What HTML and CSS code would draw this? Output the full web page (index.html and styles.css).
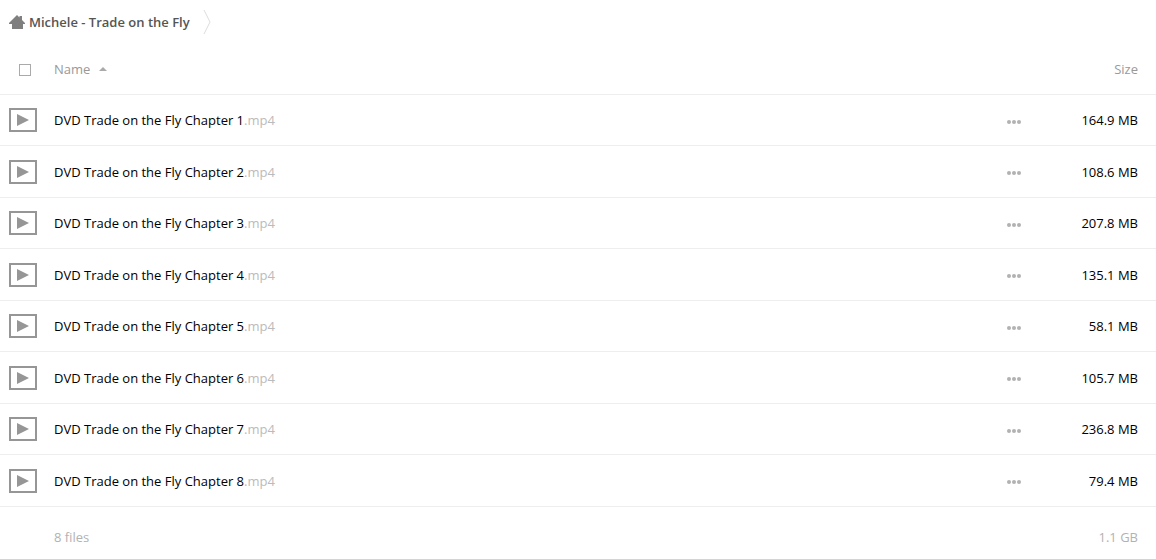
FILE: index.html
```html
<!DOCTYPE html>
<html lang="en">
<head>
<meta charset="utf-8">
<title>Michele - Trade on the Fly</title>
<link rel="stylesheet" href="styles.css">
</head>
<body>
<svg class="sprite" aria-hidden="true">
  <symbol id="video" viewBox="0 0 28 24"><path d="M1 1h26v22H1z" fill="#fff" stroke="#969696" stroke-width="2"/><path d="M8 6v12l12-6z" fill="#969696"/></symbol>
  <symbol id="dots" viewBox="0 0 14 4"><g fill="#b2b2b2"><circle cx="2" cy="2" r="2"/><circle cx="7" cy="2" r="2"/><circle cx="12" cy="2" r="2"/></g></symbol>
</svg>
<nav class="breadcrumb" aria-label="Breadcrumb">
  <a class="home" href="#">
    <svg class="home-icon" viewBox="0 0 16 14" aria-hidden="true"><path d="M8 0l2.5 2.4V1H13v4l3 3v1h-2v5H3V9H0V8z" fill="#7f7f7f"/></svg>
    <span>Michele - Trade on the Fly</span>
  </a>
  <svg class="separator" viewBox="0 0 8 26" aria-hidden="true"><path d="M1 1l6 12-6 12" fill="none" stroke="#ddd"/></svg>
</nav>
<table class="files">
  <thead>
    <tr>
      <th class="icon-cell"><input class="select-all" type="checkbox" aria-label="Select all"></th>
      <th class="name"><button class="sort" type="button">Name <svg class="arrow" viewBox="0 0 8 4" aria-hidden="true"><path d="M0 4l4-4 4 4z" fill="#aaa"/></svg></button></th>
      <th class="actions"></th>
      <th class="size"><button class="sort" type="button">Size</button></th>
    </tr>
  </thead>
  <tbody>
    <tr><td class="icon-cell"><svg class="video"><use href="#video"/></svg></td><td class="name"><a href="#">DVD Trade on the Fly Chapter 1<span class="ext">.mp4</span></a></td><td class="actions"><button class="more" type="button" aria-label="More actions"><svg class="dots"><use href="#dots"/></svg></button></td><td class="size">164.9 MB</td></tr>
    <tr><td class="icon-cell"><svg class="video"><use href="#video"/></svg></td><td class="name"><a href="#">DVD Trade on the Fly Chapter 2<span class="ext">.mp4</span></a></td><td class="actions"><button class="more" type="button" aria-label="More actions"><svg class="dots"><use href="#dots"/></svg></button></td><td class="size">108.6 MB</td></tr>
    <tr><td class="icon-cell"><svg class="video"><use href="#video"/></svg></td><td class="name"><a href="#">DVD Trade on the Fly Chapter 3<span class="ext">.mp4</span></a></td><td class="actions"><button class="more" type="button" aria-label="More actions"><svg class="dots"><use href="#dots"/></svg></button></td><td class="size">207.8 MB</td></tr>
    <tr><td class="icon-cell"><svg class="video"><use href="#video"/></svg></td><td class="name"><a href="#">DVD Trade on the Fly Chapter 4<span class="ext">.mp4</span></a></td><td class="actions"><button class="more" type="button" aria-label="More actions"><svg class="dots"><use href="#dots"/></svg></button></td><td class="size">135.1 MB</td></tr>
    <tr><td class="icon-cell"><svg class="video"><use href="#video"/></svg></td><td class="name"><a href="#">DVD Trade on the Fly Chapter 5<span class="ext">.mp4</span></a></td><td class="actions"><button class="more" type="button" aria-label="More actions"><svg class="dots"><use href="#dots"/></svg></button></td><td class="size">58.1 MB</td></tr>
    <tr><td class="icon-cell"><svg class="video"><use href="#video"/></svg></td><td class="name"><a href="#">DVD Trade on the Fly Chapter 6<span class="ext">.mp4</span></a></td><td class="actions"><button class="more" type="button" aria-label="More actions"><svg class="dots"><use href="#dots"/></svg></button></td><td class="size">105.7 MB</td></tr>
    <tr><td class="icon-cell"><svg class="video"><use href="#video"/></svg></td><td class="name"><a href="#">DVD Trade on the Fly Chapter 7<span class="ext">.mp4</span></a></td><td class="actions"><button class="more" type="button" aria-label="More actions"><svg class="dots"><use href="#dots"/></svg></button></td><td class="size">236.8 MB</td></tr>
    <tr><td class="icon-cell"><svg class="video"><use href="#video"/></svg></td><td class="name"><a href="#">DVD Trade on the Fly Chapter 8<span class="ext">.mp4</span></a></td><td class="actions"><button class="more" type="button" aria-label="More actions"><svg class="dots"><use href="#dots"/></svg></button></td><td class="size">79.4 MB</td></tr>
  </tbody>
  <tfoot>
    <tr><td class="icon-cell"></td><td class="name">8 files</td><td class="actions"></td><td class="size">1.1 GB</td></tr>
  </tfoot>
</table>
</body>
</html>
```
FILE: styles.css
```css
* {
  box-sizing: border-box;
}

body {
  margin: 0;
  background: #fff;
  color: #000;
  font: 13px/20px "Open Sans", "Noto Sans", sans-serif;
}

a {
  color: inherit;
  text-decoration: none;
}

svg {
  display: block;
}

.sprite {
  display: none;
}

.breadcrumb {
  display: flex;
  align-items: center;
  gap: 13px;
  height: 44px;
  padding-left: 9px;
}

.home {
  display: flex;
  align-items: center;
  gap: 4px;
  color: #555;
  font-weight: 600;
}

.home-icon {
  width: 16px;
  height: 14px;
}

.separator {
  width: 8px;
  height: 26px;
}

.files {
  width: 100%;
  border-collapse: separate;
  border-spacing: 0;
  table-layout: fixed;
}

th,
td {
  padding: 0;
  border-bottom: 1px solid #eee;
  font-weight: 400;
  text-align: left;
  vertical-align: middle;
}

thead tr {
  height: 51px;
}

tbody tr {
  height: 51px;
}

tbody tr:nth-child(even) {
  height: 52px;
}

tfoot tr {
  height: 52px;
  color: #b2b2b2;
}

tfoot td {
  padding-top: 8px;
  border-bottom: 0;
}

.icon-cell {
  width: 54px;
  padding-left: 9px;
}

.actions {
  width: 63px;
}

.size {
  width: 96px;
  padding-right: 18px;
  text-align: right;
}

.select-all {
  display: block;
  width: 12px;
  height: 12px;
  margin: 2px 0 0 10px;
  border: 1px solid #aaa;
  background: #fff;
  appearance: none;
}

.sort,
.more {
  padding: 0;
  border: 0;
  background: none;
  color: #999;
  font: inherit;
  cursor: pointer;
}

.sort {
  display: inline-flex;
  align-items: center;
  gap: 9px;
}

.arrow {
  width: 8px;
  height: 4px;
}

.video {
  width: 28px;
  height: 24px;
}

.ext {
  color: #bbb;
}

.more {
  display: block;
  padding: 10px;
  padding-bottom: 7px;
}

.dots {
  width: 14px;
  height: 4px;
}
```
